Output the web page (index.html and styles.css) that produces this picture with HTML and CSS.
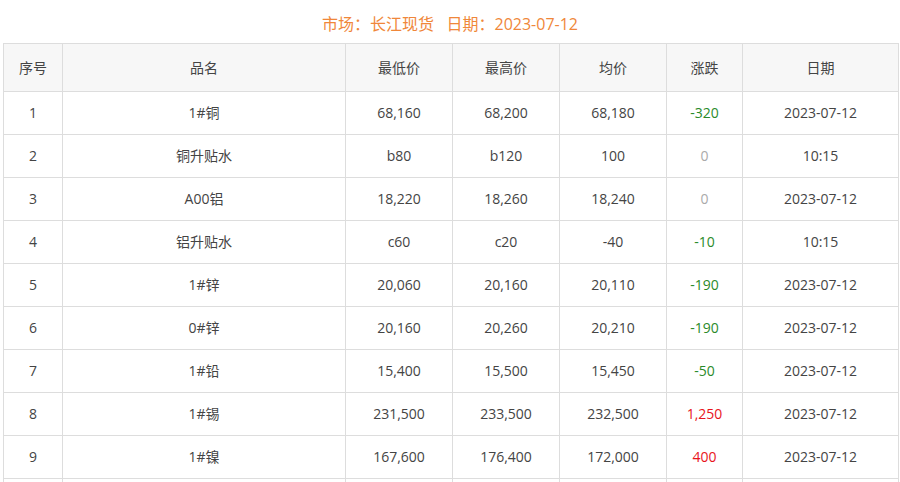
FILE: index.html
```
<!DOCTYPE html>
<html lang="zh">
<head>
<meta charset="utf-8">
<link rel="stylesheet" href="styles.css">
</head>
<body>
<div class="title">市场：长江现货&nbsp;&nbsp;&nbsp;日期：2023-07-12</div>
<table class="price">
<colgroup>
<col class="c1"><col class="c2"><col class="c3"><col class="c4"><col class="c5"><col class="c6"><col class="c7">
</colgroup>
<thead>
<tr><th>序号</th><th>品名</th><th>最低价</th><th>最高价</th><th>均价</th><th>涨跌</th><th>日期</th></tr>
</thead>
<tbody>
<tr><td>1</td><td>1#铜</td><td>68,160</td><td>68,200</td><td>68,180</td><td class="down">-320</td><td>2023-07-12</td></tr>
<tr><td>2</td><td>铜升贴水</td><td>b80</td><td>b120</td><td>100</td><td class="flat">0</td><td>10:15</td></tr>
<tr><td>3</td><td>A00铝</td><td>18,220</td><td>18,260</td><td>18,240</td><td class="flat">0</td><td>2023-07-12</td></tr>
<tr><td>4</td><td>铝升贴水</td><td>c60</td><td>c20</td><td>-40</td><td class="down">-10</td><td>10:15</td></tr>
<tr><td>5</td><td>1#锌</td><td>20,060</td><td>20,160</td><td>20,110</td><td class="down">-190</td><td>2023-07-12</td></tr>
<tr><td>6</td><td>0#锌</td><td>20,160</td><td>20,260</td><td>20,210</td><td class="down">-190</td><td>2023-07-12</td></tr>
<tr><td>7</td><td>1#铅</td><td>15,400</td><td>15,500</td><td>15,450</td><td class="down">-50</td><td>2023-07-12</td></tr>
<tr><td>8</td><td>1#锡</td><td>231,500</td><td>233,500</td><td>232,500</td><td class="up">1,250</td><td>2023-07-12</td></tr>
<tr><td>9</td><td>1#镍</td><td>167,600</td><td>176,400</td><td>172,000</td><td class="up">400</td><td>2023-07-12</td></tr>
<tr><td></td><td></td><td></td><td></td><td></td><td></td><td></td></tr>
</tbody>
</table>
</body>
</html>
```
FILE: styles.css
```
html, body {
  margin: 0;
  padding: 0;
  background: #fff;
}
body {
  font-family: "Open Sans", "Noto Sans CJK SC", sans-serif;
  font-size: 14px;
  color: #444;
}
.title {
  text-align: center;
  color: #f0873a;
  font-size: 16px;
  padding-top: 5px;
  height: 38px;
  line-height: 38px;
}
.price {
  margin-left: 3px;
  width: 895px;
  border-collapse: collapse;
  table-layout: fixed;
}
.c1 { width: 59px; }
.c2 { width: 283px; }
.c3 { width: 107px; }
.c4 { width: 107px; }
.c5 { width: 107px; }
.c6 { width: 76px; }
.c7 { width: 156px; }
.price th, .price td {
  border: 1px solid #dddddd;
  text-align: center;
  font-weight: normal;
}
.price th {
  background: #f7f7f7;
  height: 45px;
  padding: 0 0 2px;
  color: #444;
}
.price td {
  height: 40px;
  padding: 0 0 2px;
}
.down { color: #2a8a2a; }
.up { color: #e8141b; }
.flat { color: #aaa; }
```
